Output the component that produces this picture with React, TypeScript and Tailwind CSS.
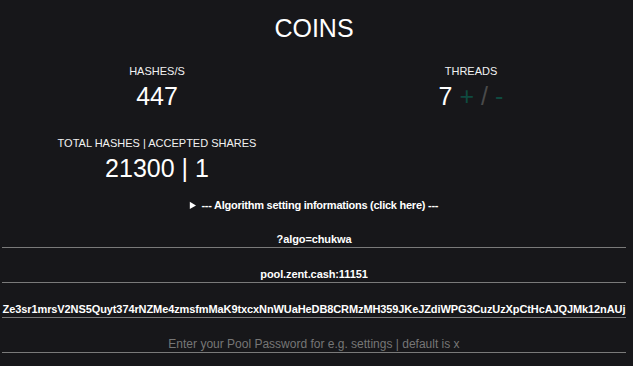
import React from "react";

const font = { fontFamily: '"Liberation Sans", Arial, sans-serif' };

const Stat: React.FC<{ label: string; children: React.ReactNode }> = ({ label, children }) => (
  <div className="flex flex-col items-center">
    <div className="text-[11px] leading-[13px] text-[#f2f2f2]">{label}</div>
    <div className="text-[25px] leading-[30px] mt-[3px] text-white">{children}</div>
  </div>
);

const Field: React.FC<{ value?: string; placeholder?: string; first?: boolean }> = ({ value, placeholder, first }) => (
  <input
    readOnly
    defaultValue={value}
    placeholder={placeholder}
    className={
      "block w-[624px] mx-[2px] h-[17px] bg-transparent text-center text-[11px] font-bold tracking-[-0.1px] text-white outline-none border-b border-[#7a7a7a] placeholder:font-normal placeholder:text-[12px] placeholder:tracking-normal placeholder:text-[#767676] " +
      (first ? "mt-[17px]" : "mt-[18px]")
    }
  />
);

export default function App() {
  return (
    <div className="min-h-[366px] w-full bg-[#17171a] text-white" style={font}>
      <div className="w-[628px] pt-[14px]">
        <h1 className="text-center text-[25px] leading-[29px]">COINS</h1>

        <div className="grid grid-cols-2 mt-[22px]">
          <Stat label="HASHES/S">447</Stat>
          <Stat label="THREADS">
            <span>7</span>
            <span className="ml-[7px] text-[#0f4a40]">+</span>
            <span className="ml-[7px] text-[#4a4a4a]">/</span>
            <span className="ml-[7px] text-[#0f4a40]">-</span>
          </Stat>
        </div>

        <div className="grid grid-cols-2 mt-[26px]">
          <Stat label="TOTAL HASHES | ACCEPTED SHARES">21300 | 1</Stat>
          <div />
        </div>

        <details className="mt-[14px] text-center text-[11px] font-bold tracking-[-0.25px]">
          <summary className="cursor-pointer">--- Algorithm setting informations (click here) ---</summary>
        </details>

        <Field first value="?algo=chukwa" />
        <Field value="pool.zent.cash:11151" />
        <Field value="Ze3sr1mrsV2NS5Quyt374rNZMe4zmsfmMaK9txcxNnWUaHeDB8CRMzMH359JKeJZdiWPG3CuzUzXpCtHcAJQJMk12nAUj" />
        <Field placeholder="Enter your Pool Password for e.g. settings | default is x" />
      </div>
    </div>
  );
}
